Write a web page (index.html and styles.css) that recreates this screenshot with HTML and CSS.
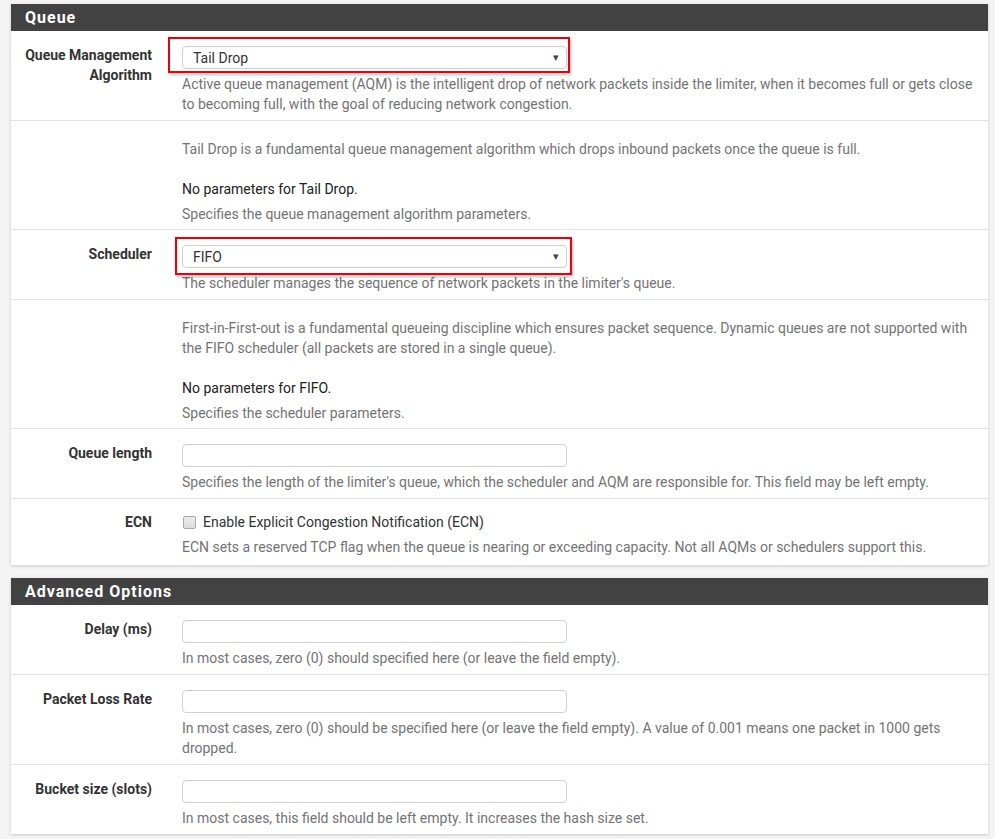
FILE: index.html
```html
<!DOCTYPE html>
<html>
<head>
<meta charset="utf-8">
<link rel="stylesheet" href="styles.css">
</head>
<body>
<div class="panel">
  <div class="panel-heading"><h2 class="panel-title">Queue</h2></div>
  <div class="panel-body">
    <div class="form-group">
      <label class="col-label">Queue Management Algorithm</label>
      <div class="col-value">
        <div class="control-wrap">
          <div class="select"><span>Tail Drop</span><span class="caret">&#9662;</span></div>
          <div class="annot annot-1"></div>
        </div>
        <div class="help-block">Active queue management (AQM) is the intelligent drop of network packets inside the limiter, when it becomes full or gets close to becoming full, with the goal of reducing network congestion.</div>
      </div>
    </div>
    <div class="form-group text-row">
      <div class="col-label"></div>
      <div class="col-value">
        <div class="help-text">Tail Drop is a fundamental queue management algorithm which drops inbound packets once the queue is full.</div>
        <div class="spacer"></div>
        <div class="plain">No parameters for Tail Drop.</div>
        <div class="help-block">Specifies the queue management algorithm parameters.</div>
      </div>
    </div>
    <div class="form-group">
      <label class="col-label">Scheduler</label>
      <div class="col-value">
        <div class="control-wrap">
          <div class="select"><span>FIFO</span><span class="caret">&#9662;</span></div>
          <div class="annot annot-2"></div>
        </div>
        <div class="help-block">The scheduler manages the sequence of network packets in the limiter's queue.</div>
      </div>
    </div>
    <div class="form-group text-row">
      <div class="col-label"></div>
      <div class="col-value">
        <div class="help-text">First-in-First-out is a fundamental queueing discipline which ensures packet sequence. Dynamic queues are not supported with the FIFO scheduler (all packets are stored in a single queue).</div>
        <div class="spacer"></div>
        <div class="plain">No parameters for FIFO.</div>
        <div class="help-block">Specifies the scheduler parameters.</div>
      </div>
    </div>
    <div class="form-group">
      <label class="col-label">Queue length</label>
      <div class="col-value">
        <div class="input"></div>
        <div class="help-block">Specifies the length of the limiter's queue, which the scheduler and AQM are responsible for. This field may be left empty.</div>
      </div>
    </div>
    <div class="form-group check-row">
      <label class="col-label">ECN</label>
      <div class="col-value">
        <div class="checkbox"><span class="box"></span><span>Enable Explicit Congestion Notification (ECN)</span></div>
        <div class="help-block">ECN sets a reserved TCP flag when the queue is nearing or exceeding capacity. Not all AQMs or schedulers support this.</div>
      </div>
    </div>
  </div>
</div>

<div class="panel">
  <div class="panel-heading"><h2 class="panel-title">Advanced Options</h2></div>
  <div class="panel-body">
    <div class="form-group">
      <label class="col-label">Delay (ms)</label>
      <div class="col-value">
        <div class="input"></div>
        <div class="help-block">In most cases, zero (0) should specified here (or leave the field empty).</div>
      </div>
    </div>
    <div class="form-group">
      <label class="col-label">Packet Loss Rate</label>
      <div class="col-value">
        <div class="input"></div>
        <div class="help-block">In most cases, zero (0) should be specified here (or leave the field empty). A value of 0.001 means one packet in 1000 gets dropped.</div>
      </div>
    </div>
    <div class="form-group">
      <label class="col-label">Bucket size (slots)</label>
      <div class="col-value">
        <div class="input"></div>
        <div class="help-block">In most cases, this field should be left empty. It increases the hash size set.</div>
      </div>
    </div>
  </div>
</div>
</body>
</html>
```

FILE: styles.css
```css
html, body {
  margin: 0;
  padding: 0;
  background: #f4f4f4;
}
body {
  padding: 4px 7px 0 11px;
  font-family: Roboto, "Liberation Sans", sans-serif;
  font-size: 14px;
  line-height: 20px;
  color: #212121;
}
.panel {
  background: #fff;
  box-shadow: 0 1px 3px rgba(0, 0, 0, 0.18);
  margin-bottom: 13px;
}
.panel-heading {
  background: #424242;
  height: 27px;
  display: flex;
  align-items: center;
  padding-left: 14px;
}
.panel-title {
  margin: 0;
  font-size: 16px;
  font-weight: 700;
  color: #fff;
  letter-spacing: 1px;
  line-height: 20px;
}
.form-group {
  display: grid;
  grid-template-columns: 156px 1fr;
  border-top: 1px solid #e3e3e3;
}
.form-group:first-child {
  border-top: none;
}
.col-label {
  padding: 14px 15px 0 14px;
  text-align: right;
  font-weight: 700;
  color: #333;
}
.col-value {
  padding: 15px 15px 6px 15px;
}
.text-row .col-value {
  padding-top: 18px;
  padding-bottom: 5px;
}
.check-row .col-label {
  padding-top: 13px;
}
.check-row .col-value {
  padding-top: 13px;
  padding-bottom: 8px;
}
.control-wrap {
  position: relative;
  width: 385px;
}
.select, .input {
  box-sizing: border-box;
  width: 385px;
  height: 23px;
  border: 1px solid #cfcfcf;
  border-radius: 4px;
  background: #fff;
}
.select {
  display: flex;
  align-items: center;
  justify-content: space-between;
  padding: 0 7px 0 10px;
  color: #333;
  font-size: 14px;
}
.caret {
  font-size: 11px;
  color: #444;
}
.annot {
  position: absolute;
  border: 2px solid #e8000b;
  box-shadow: 1px 2px 3px rgba(0, 0, 0, 0.25);
  pointer-events: none;
}
.annot-1 {
  left: -14px;
  top: -9px;
  width: 398px;
  height: 32px;
}
.annot-2 {
  left: -7px;
  top: -8px;
  width: 393px;
  height: 34px;
}
.help-block {
  margin-top: 5px;
  color: #737373;
}
.help-text {
  color: #737373;
}
.spacer {
  height: 20px;
}
.plain {
  color: #212121;
}
.checkbox {
  display: flex;
  align-items: center;
  color: #333;
}
.box {
  box-sizing: border-box;
  width: 13px;
  height: 13px;
  border: 1px solid #a8a8a8;
  border-radius: 2px;
  background: linear-gradient(#ececec, #dcdcdc);
  margin: 0 7px 0 1px;
}
```
